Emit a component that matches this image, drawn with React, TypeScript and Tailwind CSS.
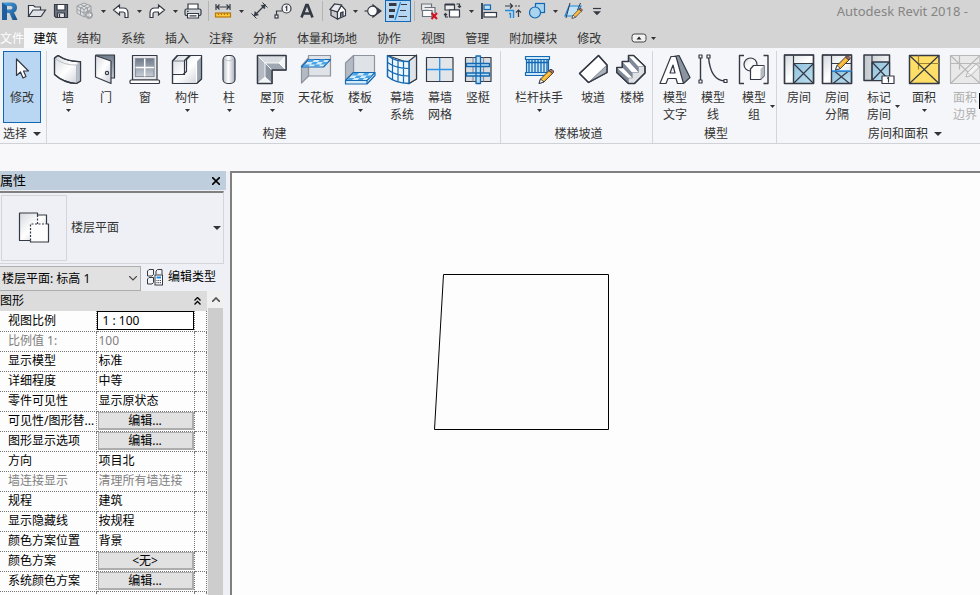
import type { ReactNode } from 'react';

const ink = '#343a45';
const blue = '#1268b3';

function Small({ children }: { children: ReactNode }) {
  return (
    <svg viewBox="0 0 20 20" className="h-5 w-5" fill="none" stroke={ink} strokeWidth="1.2" aria-hidden="true">
      {children}
    </svg>
  );
}

function Big({ children }: { children: ReactNode }) {
  return (
    <svg viewBox="0 0 32 32" className="h-8 w-8 shrink-0" fill="none" stroke={ink} strokeWidth="1.2" strokeLinejoin="round" aria-hidden="true">
      {children}
    </svg>
  );
}

function Gradients() {
  return (
    <svg className="absolute h-0 w-0" aria-hidden="true">
      <defs>
        <linearGradient id="gl" x1="0" y1="0" x2="1" y2="1">
          <stop offset="0" stopColor="#d5d8dd" />
          <stop offset="0.5" stopColor="#ffffff" />
          <stop offset="1" stopColor="#c9cdd4" />
        </linearGradient>
        <linearGradient id="gd" x1="0" y1="0" x2="0" y2="1">
          <stop offset="0" stopColor="#6f7a8a" />
          <stop offset="1" stopColor="#c8ced6" />
        </linearGradient>
        <linearGradient id="gh" x1="0" y1="0" x2="1" y2="0">
          <stop offset="0" stopColor="#b4bac3" />
          <stop offset="0.45" stopColor="#ffffff" />
          <stop offset="1" stopColor="#a5adb8" />
        </linearGradient>
        <linearGradient id="gw" x1="0" y1="0" x2="1" y2="0">
          <stop offset="0" stopColor="#c2c7ce" />
          <stop offset="1" stopColor="#f3f4f5" />
        </linearGradient>
        <linearGradient id="gb" x1="0" y1="0" x2="1" y2="1">
          <stop offset="0" stopColor="#8fc0dd" />
          <stop offset="1" stopColor="#bfe0f0" />
        </linearGradient>
        <linearGradient id="gr" x1="0" y1="0" x2="1" y2="1">
          <stop offset="0" stopColor="#4ba3e6" />
          <stop offset="1" stopColor="#184f86" />
        </linearGradient>
      </defs>
    </svg>
  );
}

function Caret({ className = '' }: { className?: string }) {
  return (
    <svg viewBox="0 0 5 3" className={`h-[3px] w-[5px] shrink-0 ${className}`} aria-hidden="true">
      <path d="M0 0h5L2.500 3z" fill="#333" />
    </svg>
  );
}

function WideCaret() {
  return (
    <svg viewBox="0 0 8 4" className="h-1 w-2 shrink-0" aria-hidden="true">
      <path d="M0 0h8L4 4z" fill="#333" />
    </svg>
  );
}

function Pencil({ light = false }: { light?: boolean }) {
  return (
    <g strokeWidth="0.9" stroke={light ? '#b5b5b5' : ink}>
      <path d="M0 14L1.500 9.500 10 1l3.500 3L5 12.500z" fill={light ? '#eee' : '#f6ad22'} />
      <path d="M0 14L1.500 9.500 5 12.500z" fill={light ? '#f5f5f5' : '#fff'} />
      <path d="M10 1l1-1h2l1.500 1.500V3l-1 1z" fill={light ? '#ddd' : '#b86a5a'} />
      <path d="M3.500 10.500l7.500-7.500" stroke={light ? '#fff' : '#ffe39a'} />
    </g>
  );
}

const quick: Record<string, ReactNode> = {
  open: (
    <Small>
      <path d="M1.500 15.500V4.500h5l1.500 1.500h5.500v3" fill="#f4f4f4" />
      <path d="M1.500 15.500L6 9h12.500l-4.500 6.500z" fill="#dfe2e6" />
    </Small>
  ),
  save: (
    <Small>
      <path d="M3.500 3.500h13v13h-11.500l-1.500-1.500z" fill="#6d7582" />
      <path d="M6 3.500h8v5.500H6z" fill="#fff" />
      <path d="M6.500 12h7v4.500h-7z" fill="#e4e6e9" />
      <path d="M8.500 13v3" />
    </Small>
  ),
  sync: (
    <Small>
      <g stroke="#9b9ea2" strokeWidth="1" fill="#dcdddf">
        <path d="M9 2l7 3v7l-7 4-7-4V5z" />
        <path d="M2 5l7 3.500L16 5M9 8.500V16" />
        <path d="M5.500 3.500l7 3.500v7M12.500 3.500l-7 3.500v7M2 8.500l7 3.500 7-3.500" fill="none" />
        <circle cx="14" cy="14" r="3.500" fill="#a9acb0" />
        <path d="M12 14h4M14.500 12.500L16 14l-1.500 1.500" stroke="#fff" fill="none" />
      </g>
    </Small>
  ),
  undo: (
    <Small>
      <path d="M2.500 9l6-5v3h3.500q5 0 5 5v4.500h-3V13q0-2-2-2H8.500v3z" fill="#fff" />
    </Small>
  ),
  redo: (
    <Small>
      <path d="M17.500 9l-6-5v3H8q-5 0-5 5v4.500h3V13q0-2 2-2h3.500v3z" fill="#fff" />
    </Small>
  ),
  print: (
    <Small>
      <path d="M5 8V3h10v5" fill="#fff" />
      <rect x="2" y="8" width="16" height="6.500" rx="1.500" fill="#cfd3d8" />
      <path d="M4.500 12.500h11V17h-11z" fill="#fff" />
      <path d="M6.500 14.800h7M4 10.300h1.500" />
    </Small>
  ),
  measure: (
    <Small>
      <path d="M3 3v6M17 3v6M3.500 6h13M6.500 3.500L4 6l2.500 2.500M13.500 3.500L16 6l-2.500 2.500" />
      <rect x="2.500" y="12" width="15" height="4" fill="#ffc83d" stroke="#b77a08" />
      <path d="M5.500 12v2M8.500 12v2M11.500 12v2M14.500 12v2" stroke="#b77a08" />
    </Small>
  ),
  dimension: (
    <Small>
      <path d="M5.500 14.500L16 4" />
      <path d="M16.500 3.500l-4.500 1 3.500 3.500zM5 15l1-4.500 3.500 3.500z" fill="#343a45" strokeWidth="0.500" />
      <path d="M2.500 12.500l5 5M13.500 1.500l5 5" strokeWidth="1" />
    </Small>
  ),
  tag: (
    <Small>
      <circle cx="13.500" cy="7.500" r="4.500" fill="#f4f4f4" />
      <path d="M12.500 6.500l1.200-1V10M9 10H3.500v5" />
      <rect x="2" y="14" width="3" height="3" fill="#fff" />
    </Small>
  ),
  text: (
    <Small>
      <path d="M4.500 16.500L9.300 4h1.400l4.800 12.500M7 12.500h6.500" strokeWidth="2.600" />
    </Small>
  ),
  house: (
    <Small>
      <path d="M4 8.500l6.500 2.500v7L4 14.500z" fill="#c9cdd2" />
      <path d="M10.500 11l4-6.500 4 4.500v5.500l-8 3.500z" fill="#fff" />
      <path d="M3 8.500L7.500 3l7 1-4 7z" fill="#e9eaed" />
      <path d="M13.500 16.500V12l2.500-1v4.500" fill="#7c8593" />
    </Small>
  ),
  section: (
    <Small>
      <path d="M10 4l8 6-8 6z" fill="#343a45" />
      <circle cx="9.500" cy="10" r="4.800" fill="#fafafa" />
      <path d="M1.500 10h3" />
    </Small>
  ),
  thin: (
    <Small>
      <path d="M1 3.500h7.500M1 9.500h6M1 15.500h5" strokeWidth="3" />
      <path d="M13 3.500h6M12 9.500h6M10.500 15.500H19" strokeWidth="1.200" />
      <path d="M12.500 1L7 19" stroke="#1d8be0" />
    </Small>
  ),
  closeHidden: (
    <Small>
      <path d="M2.500 9.500V3h10v3" fill="#ececec" stroke="#6c727b" />
      <path d="M5.500 6.500h10.500V12" fill="#ececec" stroke="#6c727b" />
      <path d="M3.500 9.500h9.500v6H3.500z" fill="#fff" stroke="#6c727b" />
      <path d="M12.500 12l5.500 6M18 12l-5.500 6" stroke="#d01020" strokeWidth="2" />
    </Small>
  ),
  switchWin: (
    <Small>
      <path d="M2 3.500h9.500V9H2z" fill="#eee" />
      <path d="M2 3.500h9.500M6.500 9.500h10" strokeWidth="1.800" />
      <path d="M6.500 9h10v7h-10z" fill="#fff" />
      <path d="M13.500 3h3V6M15 5l1.500 1.500L18 5M5 16H2.500v-3.500M1 14l1.500-1.500L4 14" />
    </Small>
  ),
  align: (
    <Small>
      <path d="M3 2v16" strokeWidth="1.800" />
      <rect x="5" y="4" width="6.500" height="4.500" fill="#bfe0f5" stroke={blue} />
      <rect x="5" y="11.500" width="12.500" height="4.500" fill="#fff" />
    </Small>
  ),
  trim: (
    <Small>
      <path d="M2 5h7M7 2.500L9.500 5 7 7.500M15.500 16V9M13 11.500L15.500 9l2.500 2.500" />
      <path d="M2 9.500h8.500V17M6 12.500h1.500V17" stroke="#1d8be0" strokeWidth="1.400" />
      <path d="M12 5h6" strokeDasharray="2 1" />
    </Small>
  ),
  shape: (
    <Small>
      <rect x="8.500" y="2.500" width="9" height="9" fill="#a9d4ee" stroke={blue} />
      <circle cx="8" cy="11.500" r="5.500" fill="#a9d4ee" stroke={blue} />
    </Small>
  ),
  plane: (
    <Small>
      <path d="M6 5h12l-5 10H2z" fill="#bfe0f5" stroke="#1d8be0" />
      <path d="M7 2L3 17M17.500 2l-3 7" strokeWidth="1" />
      <g transform="translate(9 7.500) scale(.7)">
        <Pencil />
      </g>
    </Small>
  ),
  customize: (
    <Small>
      <path d="M6 7.500h8" />
      <path d="M6.500 10.500h7L10 14z" fill="#343a45" strokeWidth="0.500" />
    </Small>
  ),
};

type QuickItem = { icon?: string; label: string; kind?: 'caret' | 'sep' };
const quickItems: QuickItem[] = [
  { icon: 'open', label: '打开' },
  { icon: 'save', label: '保存' },
  { icon: 'sync', label: '同步' },
  { kind: 'caret', label: '同步选项' },
  { icon: 'undo', label: '放弃' },
  { kind: 'caret', label: '放弃列表' },
  { icon: 'redo', label: '重做' },
  { kind: 'caret', label: '重做列表' },
  { icon: 'print', label: '打印' },
  { kind: 'sep', label: 's1' },
  { icon: 'measure', label: '测量' },
  { kind: 'caret', label: '测量选项' },
  { icon: 'dimension', label: '对齐尺寸标注' },
  { icon: 'tag', label: '按类别标记' },
  { icon: 'text', label: '文字' },
  { kind: 'sep', label: 's2' },
  { icon: 'house', label: '默认三维视图' },
  { kind: 'caret', label: '三维视图选项' },
  { icon: 'section', label: '剖面' },
  { icon: 'thin', label: '细线' },
  { kind: 'sep', label: 's3' },
  { icon: 'closeHidden', label: '关闭隐藏窗口' },
  { icon: 'switchWin', label: '切换窗口' },
  { kind: 'caret', label: '切换窗口选项' },
  { icon: 'align', label: '对齐' },
  { icon: 'trim', label: '修剪' },
  { icon: 'shape', label: '连接' },
  { kind: 'caret', label: '连接选项' },
  { icon: 'plane', label: '工作平面' },
  { icon: 'customize', label: '自定义快速访问工具栏' },
];

function TitleBar() {
  return (
    <header className="flex h-[22px] items-center">
      <button aria-label="应用程序菜单" className="flex h-[22px] w-[25px] shrink-0 items-center">
        <svg viewBox="0 0 20 20" className="h-5 w-5" aria-hidden="true">
          <path d="M2 1.500h9q6 0 6 5 0 3.500-3 5l3.500 7.500h-5L9.500 12H7v7H2z" fill="url(#gr)" />
          <path d="M7 5h3.500q2 0 2 1.800t-2 1.800H7z" fill="#d6d6d6" />
          <path d="M2 1.500L7 5v14H2z" fill="#1f5f9e" />
        </svg>
      </button>
      {quickItems.map((q) => {
        if (q.kind === 'sep') {
          return (
            <span key={q.label} className="flex w-1.5 shrink-0 justify-center">
              <span className="h-5 w-px bg-[#b4b4b4]" />
            </span>
          );
        }
        if (q.kind === 'caret') {
          return (
            <button key={q.label} aria-label={q.label} className="flex h-[22px] w-3 shrink-0 items-center justify-center">
              <Caret />
            </button>
          );
        }
        const active = q.icon === 'thin';
        return (
          <button
            key={q.label}
            aria-label={q.label}
            className={`flex h-[22px] shrink-0 items-center justify-center ${active ? 'w-[26px] border border-[#1268b3] bg-[#b5d5f1]' : 'w-6'}`}
          >
            {quick[q.icon as string]}
          </button>
        );
      })}
      <span className="ml-auto shrink-0 pr-3 text-[13px] leading-5 text-[#858585]">Autodesk Revit 2018 -</span>
    </header>
  );
}

const tabs = ['结构', '系统', '插入', '注释', '分析', '体量和场地', '协作', '视图', '管理', '附加模块', '修改'];

function TabBar() {
  return (
    <nav className="flex h-[26px] items-end text-xs leading-5 text-[#333]">
      <button className="h-5 w-6 shrink-0 pt-px whitespace-nowrap text-white">文件</button>
      <button className="h-5 w-[43px] shrink-0 bg-[#f7f8fa] pt-px text-black">建筑</button>
      {tabs.map((t) => (
        <button key={t} className="h-5 shrink-0 px-2.5 pt-px">
          {t}
        </button>
      ))}
      <button aria-label="最小化功能区" className="ml-5 flex h-5 items-center gap-1">
        <svg viewBox="0 0 16 10" className="h-2.5 w-4" aria-hidden="true">
          <rect x="1" y="1" width="14" height="8" rx="2.500" fill="#f2f2f2" stroke="#444" />
          <path d="M5.500 6.500h5L8 3.500z" fill="#222" />
        </svg>
        <Caret />
      </button>
    </nav>
  );
}

const roomBase = (
  <>
    <path d="M1.500 2h29v28.500h-29z" fill="url(#gl)" />
    <path d="M10.500 10.500h20v20h-20z" fill="url(#gb)" />
    <path d="M10.500 2v28.500M10.500 10.500h20M10.500 10.500l20 20M30.500 10.500l-20 20" />
  </>
);

const art: Record<string, ReactNode> = {
  墙: (
    <Big>
      <path d="M2.500 5L6 2.500Q16 9 28.500 8.500V28L24.500 30.500Q12 30 2.500 21.500z" fill="url(#gl)" />
      <path d="M24.500 12l4-3.500V28l-4 2.500z" fill="#b9bfc8" stroke="none" />
      <path d="M2.500 5Q12 12.500 24.500 12v18.500M24.500 12l4-3.500" stroke="#a3a9b3" strokeWidth="0.700" />
      <path d="M2.500 5L6 2.500Q16 9 28.500 8.500V28L24.500 30.500Q12 30 2.500 21.500z" />
    </Big>
  ),
  门: (
    <Big>
      <path d="M5.500 2h19v23h-4" fill="url(#gd)" />
      <path d="M5.500 2.500L21 8v22.500L5.500 24z" fill="url(#gl)" />
      <circle cx="17" cy="20" r="1.600" fill="#fff" />
    </Big>
  ),
  窗: (
    <Big>
      <path d="M3.500 2.500h24.500V27H3.500z" fill="#e6e8eb" />
      <path d="M6.500 5.500h18.500v18H6.500z" fill="url(#gd)" stroke="#8a919c" />
      <path d="M15.700 5.500v18M6.500 14.500H25" stroke="#fff" strokeWidth="1.500" />
      <rect x="1" y="27" width="29.500" height="3.500" rx="1" fill="#fff" />
    </Big>
  ),
  构件: (
    <Big>
      <path d="M1.500 8L6.500 2.500h24V26l-5 4.500h-24z" fill="url(#gl)" />
      <path d="M25.500 8l5-5.500V26l-5 4.500z" fill="#99a2af" stroke="none" />
      <path d="M18 8h7.500v22.500M25.500 8l5-5.500" stroke="#fff" />
      <path d="M1.500 21.500H12l3.500-3V6.500l4-4M12 21.500l1.500 0V7.500L18.500 2.500" />
      <path d="M1.500 8h11.500" stroke="#8a919c" />
      <path d="M1.500 8L6.500 2.500h24V26l-5 4.500h-24z" />
    </Big>
  ),
  柱: (
    <Big>
      <rect x="10" y="2.500" width="12" height="28" rx="4.500" fill="url(#gh)" />
      <path d="M11 6q5 3.500 10 0" stroke="#b4bac3" strokeWidth="0.800" />
    </Big>
  ),
  屋顶: (
    <Big>
      <path d="M1.500 2.500h28.500V17H16v13.500H1.500z" fill="#d9dce0" />
      <path d="M1.500 2.500L9 10v14l-7.500 6.500z" fill="#b4bac3" stroke="none" />
      <path d="M9 10l7 7v13.500L9 24z" fill="#8b94a1" stroke="none" />
      <path d="M9 10h14l7 7H16z" fill="#9fa7b2" stroke="none" />
      <path d="M23 10l7-7.500V17z" fill="#f4f5f6" stroke="none" />
      <path d="M1.500 30.500L9 24l7 6.500z" fill="#f4f5f6" stroke="none" />
      <path d="M1.500 2.500L9 10h14l7-7.500M23 10l7 7M9 10v14l-7.500 6.500M9 24l7 6.500M9 10l7 7" stroke="#fff" strokeWidth="0.900" />
      <path d="M1.500 2.500h28.500V17H16v13.500H1.500z" strokeWidth="1.400" />
    </Big>
  ),
  天花板: (
    <Big>
      <g stroke="#8d949e">
        <path d="M8.500 2.500h22V23h-22z" fill="#dfe2e6" />
        <path d="M1.500 13L8.500 5v18l-7 7z" fill="#b4bac3" />
      </g>
      <path d="M1.500 14l7-7.500h22L23.500 14z" fill="#d4ecfa" stroke={blue} />
      <path d="M9 6.500h5.500l-2 2.500H7zM20 6.500h5L23 9h-5zM13 9h5l-2.500 2.500h-5zM23 9h5l-2.500 2.500h-5zM5 11.500h5L8 14H2.500zM15.500 11.500h5L18 14h-5z" fill="#4ba3e6" stroke="none" />
    </Big>
  ),
  楼板: (
    <Big>
      <g stroke="#8d949e">
        <path d="M9.500 2.500h21V20h-21z" fill="#dfe2e6" />
        <path d="M1.500 10l8-7.500V19l-8 8z" fill="#b4bac3" />
      </g>
      <path d="M1.500 27.500l8-8h21.500v3l-8 8.500H1.500z" fill="#d4ecfa" stroke={blue} />
      <path d="M1.500 27.500H23l8-8M23 27.500V31" stroke={blue} />
      <path d="M10 20h5l-2.500 2.500h-5zM20.500 20h5L23 22.500h-5zM13 22.500h5L15.500 25h-5zM23 22.500h5L25.500 25h-5zM5 25h5.500L8 27H3zM15.500 25h5L18.500 27h-5z" fill="#4ba3e6" stroke="none" />
    </Big>
  ),
  幕墙系统: (
    <Big>
      <path d="M1.500 2.500H30.500V26L23 30.500V10z" fill="#eceef0" />
      <path d="M23 8l7.500-6V26L23 30.500z" fill="#dfe2e6" />
      <path d="M1.500 2.500Q10 9 23 8.500v22Q9 30 1.500 23.500z" fill="#eef7fd" stroke={blue} strokeWidth="1.500" />
      <path d="M6.500 5.500v21.500M12 7.500V29M17.500 8.500V30M1.500 9.500Q10 15.500 23 15.500M1.500 16.500Q10 23 23 23" stroke={blue} />
    </Big>
  ),
  幕墙网格: (
    <Big>
      <path d="M2.500 4.500h26.500v24H2.500z" fill="#e3e6e9" />
      <path d="M15.700 5v23M3 16.500h25.500" stroke="#2f94e8" strokeWidth="1.400" />
    </Big>
  ),
  竖梃: (
    <Big>
      <path d="M3.500 4.500h25.500v24H3.500z" fill="#d9dde1" />
      <path d="M11 4.500v24M21.500 4.500v24" stroke="#8a919c" />
      <g fill="#b9dff5" stroke={blue} strokeWidth="1.300">
        <path d="M4.500 10.500h23v3h-23zM4.500 20h23v3h-23zM14 3h4.500v27.500H14z" />
      </g>
    </Big>
  ),
  栏杆扶手: (
    <Big>
      <path d="M2.500 3.500h24v3h-24zM3.500 6.500h22v13h-22zM2.500 19.500h24v3h-24z" fill="#cbe7f8" stroke={blue} />
      <path d="M6 7v12M9 7v12M12 7v12M15 7v12M18 7v12M21 7v12M24 7v12M3 9.500h23" stroke={blue} strokeWidth="1.300" />
      <g transform="translate(16 16.500)">
        <Pencil />
      </g>
    </Big>
  ),
  坡道: (
    <Big>
      <path d="M2.500 20.500L21.500 2.500 30 12v7.500l-18.500 10z" fill="#fff" />
      <path d="M11.500 29.500L30 12v7.500z" fill="#aab1bc" stroke="#6d7582" strokeWidth="0.800" />
      <path d="M2.500 20.500L21.500 2.500 30 12v7.500l-18.500 10z" strokeWidth="1.400" />
    </Big>
  ),
  楼梯: (
    <Big>
      <path d="M12.500 2.500h5L29 13.500V20L18.500 30.500h-6L.8 19.500v-5h5.500v-6h6.200z" fill="#dfe1e4" />
      <path d="M12.500 2.500l10 11v6l-10-11zM6.300 8.500l10 11V25L6.300 14.500zM.8 14.500L12.500 25v5.500L.8 19.500z" fill="#7f8997" stroke="none" />
      <path d="M12.500 2.500h5L29 13.500h-6.500zM6.300 8.500h6.200l10 11h-6.200zM.8 14.500h5.500L16.300 25h-3.800z" fill="#fff" stroke="none" />
      <path d="M29 13.500h-6.500v6h-6.200V25h-3.800v5.500" stroke="#8a919c" strokeWidth="0.700" />
      <path d="M12.500 2.500h5L29 13.500V20L18.500 30.500h-6L.8 19.500v-5h5.500v-6h6.200z" strokeWidth="1.400" />
    </Big>
  ),
  模型文字: (
    <Big>
      <path d="M14 3.500L20 2.500l11 22-6.500 6H20z" fill="#8b94a1" />
      <path d="M1 30.500L12 3.500h5L24.500 30.500h-6l-1.500-5H9l-2 5zM11 20h5l-2-8z" fill="#fff" fillRule="evenodd" />
    </Big>
  ),
  模型线: (
    <Big>
      <path d="M3.500 4v24M11.500 4q2 23 16 24" strokeWidth="1.400" />
      <g fill="#fff">
        <path d="M2 2h3v3H2zM2 27h3v3H2zM10 2h3v3h-3zM27 26.500h3v3h-3z" />
      </g>
    </Big>
  ),
  模型组: (
    <Big>
      <path d="M6 2.500H1.500v28H6M25.500 2.500H30v28h-4.500" strokeWidth="1.400" />
      <circle cx="12.500" cy="11.500" r="6.500" fill="url(#gl)" />
      <path d="M12.500 16l3-3.500H26v10.500l-3.500 3.500h-10z" fill="#fff" />
      <path d="M22.500 16l3.500-3.500v10.500l-3.500 3.500z" fill="#b4bac3" stroke="none" />
    </Big>
  ),
  房间: (
    <Big>
      {roomBase}
      <path d="M1.500 2h29v28.500h-29z" strokeWidth="1.500" />
    </Big>
  ),
  房间分隔: (
    <Big>
      <path d="M1.500 2h29v28.500h-29z" fill="url(#gl)" />
      <path d="M10.500 18.500h20v12h-20z" fill="url(#gb)" />
      <path d="M10.500 2v28.500M10.500 10.500h20M14 18.500l14.500 12M27 18.500l-15 12" />
      <path d="M1.500 2h29v28.500h-29z" strokeWidth="1.500" />
      <path d="M11 18h19.500" stroke="#2f94e8" strokeWidth="1.600" />
      <g transform="translate(14.500 3)">
        <Pencil />
      </g>
    </Big>
  ),
  标记房间: (
    <Big>
      <path d="M1 2h25.500v25.500H1z" fill="url(#gw)" strokeWidth="1.500" />
      <path d="M9 9h17.500v18.500H9z" fill="url(#gb)" />
      <path d="M9 2v25.500M9 9h17.500M9 9l17.500 18.500M26.500 9L9 27.500" />
      <rect x="19" y="23" width="12" height="7.500" fill="#fff" />
      <path d="M24 25.500l1.500-1v5" />
    </Big>
  ),
  面积: (
    <Big>
      <path d="M1.500 2.500h29.500v28H1.500z" fill="#ffdf68" strokeWidth="1.500" />
      <path d="M10.500 2.500v14M10.500 10.500H31" stroke="#a08430" />
      <path d="M1.500 2.500l29.500 28M31 2.500l-29.500 28" />
    </Big>
  ),
  面积边界: (
    <Big>
      <g stroke="#b8b8b8">
        <path d="M1.500 2.500h29.500v28H1.500z" fill="#e9e9ea" />
        <path d="M1.500 2.500l29.500 28M31 2.500l-29.500 28M10.500 2.500v14M1.500 10.500H31" />
      </g>
      <g transform="translate(17 10)">
        <Pencil light />
      </g>
    </Big>
  ),
};

type Tool = { name: string; lines: string[]; width: string; menu?: 'below' | 'side'; off?: boolean };

function ToolButton({ tool }: { tool: Tool }) {
  return (
    <button className={`flex shrink-0 flex-col items-center ${tool.width} ${tool.off ? 'text-[#b0b0b0]' : 'text-[#333]'}`}>
      {art[tool.name]}
      <span className="mt-1 flex items-center gap-1 leading-[17px]">
        {tool.menu === 'side' && <span className="w-[5px]" />}
        <span className="flex flex-col">
          {tool.lines.map((l) => (
            <span key={l} className="whitespace-nowrap">{l}</span>
          ))}
        </span>
        {tool.menu === 'side' && <Caret />}
      </span>
      {tool.menu === 'below' && <Caret className="mt-[3px]" />}
    </button>
  );
}

function Panel({ title, tools, className, menu }: { title: string; tools: Tool[]; className: string; menu?: boolean }) {
  return (
    <section className={`flex shrink-0 flex-col border-r border-[#d3d5d9] pt-0.5 ${className}`}>
      <div className="flex h-[71px]">
        {tools.map((t) => (
          <ToolButton key={t.name} tool={t} />
        ))}
      </div>
      <h2 className="flex h-[19px] items-center justify-center gap-1.5 text-[#333]">
        {title}
        {menu && <WideCaret />}
      </h2>
    </section>
  );
}

const build: Tool[] = [
  { name: '墙', lines: ['墙'], width: 'w-[38px]', menu: 'below' },
  { name: '门', lines: ['门'], width: 'w-[38px]' },
  { name: '窗', lines: ['窗'], width: 'w-10' },
  { name: '构件', lines: ['构件'], width: 'w-11', menu: 'below' },
  { name: '柱', lines: ['柱'], width: 'w-10', menu: 'below' },
  { name: '屋顶', lines: ['屋顶'], width: 'w-[46px]', menu: 'below' },
  { name: '天花板', lines: ['天花板'], width: 'w-[42px]' },
  { name: '楼板', lines: ['楼板'], width: 'w-[46px]', menu: 'below' },
  { name: '幕墙系统', lines: ['幕墙', '系统'], width: 'w-[38px]' },
  { name: '幕墙网格', lines: ['幕墙', '网格'], width: 'w-[38px]' },
  { name: '竖梃', lines: ['竖梃'], width: 'w-[38px]' },
];
const circulation: Tool[] = [
  { name: '栏杆扶手', lines: ['栏杆扶手'], width: 'w-[68px]', menu: 'below' },
  { name: '坡道', lines: ['坡道'], width: 'w-10' },
  { name: '楼梯', lines: ['楼梯'], width: 'w-[38px]' },
];
const model: Tool[] = [
  { name: '模型文字', lines: ['模型', '文字'], width: 'w-[38px]' },
  { name: '模型线', lines: ['模型', '线'], width: 'w-[38px]' },
  { name: '模型组', lines: ['模型', '组'], width: 'w-11', menu: 'side' },
];
const room: Tool[] = [
  { name: '房间', lines: ['房间'], width: 'w-[38px]' },
  { name: '房间分隔', lines: ['房间', '分隔'], width: 'w-[38px]' },
  { name: '标记房间', lines: ['标记', '房间'], width: 'w-[46px]', menu: 'side' },
  { name: '面积', lines: ['面积'], width: 'w-11', menu: 'below' },
  { name: '面积边界', lines: ['面积', '边界'], width: 'w-[38px]', off: true },
];

function Ribbon() {
  return (
    <div className="relative flex shrink-0 overflow-hidden border-b border-[#d0d2d6] bg-[#f5f6f9] pt-[3px] text-xs">
      <section className="flex w-[47px] shrink-0 flex-col border-r border-[#d3d5d9] pl-[3px]">
        <button className="flex h-[72px] w-[38px] flex-col items-center border border-[#1268b3] bg-[#b9d6f2] pt-0.5 text-[#333]">
          <Big>
            <path d="M10.500 5v16.500l4-3.500 2.500 6 3-1.500-2.500-5.500h5z" fill="#fff" />
          </Big>
          <span className="mt-[3px] leading-[17px]">修改</span>
        </button>
        <h2 className="mt-px flex h-[19px] items-center gap-1.5 text-[#333]">
          选择
          <WideCaret />
        </h2>
      </section>
      <Panel title="构建" tools={build} className="w-[454px] pl-0.5" />
      <Panel title="楼梯坡道" tools={circulation} className="w-[152px] pl-1" />
      <Panel title="模型" tools={model} className="w-[124px] pl-[3px]" />
      <Panel title="房间和面积" tools={room} className="w-[254px] pl-[3px]" menu />
      <span className="absolute top-[45px] right-0 h-4 w-px bg-black" />
    </div>
  );
}

type Row = { label: string; value: string; kind?: 'input' | 'button'; off?: boolean };
const rows: Row[] = [
  { label: '视图比例', value: '1 : 100', kind: 'input' },
  { label: '比例值 1:', value: '100', off: true },
  { label: '显示模型', value: '标准' },
  { label: '详细程度', value: '中等' },
  { label: '零件可见性', value: '显示原状态' },
  { label: '可见性/图形替...', value: '编辑...', kind: 'button' },
  { label: '图形显示选项', value: '编辑...', kind: 'button' },
  { label: '方向', value: '项目北' },
  { label: '墙连接显示', value: '清理所有墙连接', off: true },
  { label: '规程', value: '建筑' },
  { label: '显示隐藏线', value: '按规程' },
  { label: '颜色方案位置', value: '背景' },
  { label: '颜色方案', value: '<无>', kind: 'button' },
  { label: '系统颜色方案', value: '编辑...', kind: 'button' },
  { label: '', value: '' },
];

function PropertyTable() {
  return (
    <table className="w-full table-fixed border-collapse bg-[#fdfdfd]">
      <colgroup>
        <col className="w-24" />
        <col />
        <col className="w-3" />
      </colgroup>
      <tbody>
        {rows.map((r, i) => (
          <tr key={r.label} className={`h-5 ${r.off ? 'text-[#808080]' : 'text-black'}`}>
            <th scope="row" className="border-r border-b border-dotted border-[#777] p-0 pl-2 text-left font-normal whitespace-nowrap">
              {r.kind === 'input' ? <label htmlFor="view-scale">{r.label}</label> : <span id={`prop-${i}`}>{r.label}</span>}
            </th>
            <td className="border-r border-b border-dotted border-[#777] p-0 whitespace-nowrap">
              {r.kind === 'input' && (
                <input id="view-scale" defaultValue={r.value} className="block h-[19px] w-full border border-black bg-white pl-[5px] leading-4" />
              )}
              {r.kind === 'button' && (
                <button aria-describedby={`prop-${i}`} className="ml-px block h-[18px] w-24 border border-r-2 border-b-2 border-[#adadad] bg-[#e1e1e1] text-center leading-[15px]">
                  {r.value}
                </button>
              )}
              {!r.kind && <span className="pl-0.5">{r.value}</span>}
            </td>
            <td className="border-r border-b border-dotted border-[#777] p-0" />
          </tr>
        ))}
      </tbody>
    </table>
  );
}

function Properties() {
  return (
    <aside className="flex w-[226px] shrink-0 flex-col overflow-hidden text-xs">
      <div className="flex h-[19px] shrink-0 items-center justify-between bg-[#bfcedc] pr-1.5 text-[13px] text-black">
        <h2>属性</h2>
        <button aria-label="关闭" className="flex h-4 w-3 items-center justify-end">
          <svg viewBox="0 0 8 8" className="h-2 w-2" stroke="#000" strokeWidth="1.600" aria-hidden="true">
            <path d="M0 0l8 8M8 0L0 8" />
          </svg>
        </button>
      </div>
      <div className="mt-px mr-0.5 flex min-h-0 flex-1 flex-col">
        <button className="flex h-[73px] shrink-0 items-center gap-1 border-t-2 border-r border-b border-t-[#808080] border-r-[#d3d5d9] border-b-[#d3d5d9] pr-0.5 pl-px text-[#333]">
          <span className="flex h-[66px] w-[66px] items-center justify-center border border-[#d3d5d9]">
            <Big>
              <path d="M1.500 1h18v2h9v25h-27z" fill="url(#gl)" stroke="none" />
              <path d="M12.500 28.500h-11V1h18v2h9v9" />
              <path d="M12.500 12h18v18h-18z" fill="#fdfdfd" stroke="none" />
              <path d="M12.500 28.500V30h18V12H28.500" />
              <path d="M12.500 28.500V12h16M19.500 3v9" strokeDasharray="2 1.500" />
            </Big>
          </span>
          <span className="flex-1 text-left">楼层平面</span>
          <WideCaret />
        </button>
        <div className="mt-0.5 flex shrink-0 items-start">
          <div className="relative flex">
            <select aria-label="视图实例" className="h-[25px] w-[141px] appearance-none border border-l-0 border-[#adadad] bg-[#e1e1e1] pl-0.5 text-black">
              <option>楼层平面: 标高 1</option>
            </select>
            <svg viewBox="0 0 8 5" className="pointer-events-none absolute top-2.5 right-1 h-[5px] w-2" fill="none" stroke="#444" strokeWidth="1.200" aria-hidden="true">
              <path d="M0 0l4 4 4-4" />
            </svg>
          </div>
          <button className="ml-1 flex h-[22px] items-center gap-[3px] whitespace-nowrap text-black">
            <Small>
              <path d="M2.500 4L4 2.500h4.500v5L7 9H2.500zM11 4l1.500-1.500H17v5M2.500 12L4 10.500h4.500v5L7 17H2.500zM11 4v3.500" fill="#f4f4f4" strokeWidth="1" />
              <rect x="10" y="8" width="7.500" height="10" fill="#fff" strokeWidth="1" />
              <path d="M11.500 10.500h4.500" stroke="#1d8be0" strokeWidth="2" />
              <path d="M11.500 13.500h4.500M11.500 15.700h4.500" strokeDasharray="1 0.800" />
            </Small>
            编辑类型
          </button>
        </div>
        <div className="flex min-h-0 flex-1">
          <div className="min-w-0 flex-1 overflow-hidden">
            <h3 className="flex h-5 items-center justify-between bg-[#dcdcdc] pr-1.5 text-black">
              图形
              <svg viewBox="0 0 7 8" className="h-2 w-[7px]" fill="none" stroke="#000" strokeWidth="1.300" aria-hidden="true">
                <path d="M.5 3.500l3-3 3 3M.5 7.500l3-3 3 3" />
              </svg>
            </h3>
            <PropertyTable />
          </div>
          <div className="flex w-[17px] shrink-0 flex-col items-center bg-[#f0f0f0]">
            <button aria-label="向上滚动" className="flex h-[17px] w-full items-center justify-center">
              <svg viewBox="0 0 8 5" className="h-[5px] w-2" fill="none" stroke="#505050" strokeWidth="1.600" aria-hidden="true">
                <path d="M0 5l4-4 4 4" />
              </svg>
            </button>
            <span className="w-[15px] flex-1 bg-[#cdcdcd]" />
          </div>
        </div>
      </div>
    </aside>
  );
}

export default function App() {
  return (
    <div className="flex h-screen flex-col overflow-hidden bg-[#eef0f5] font-['Noto_Sans','Noto_Sans_CJK_SC',sans-serif]">
      <Gradients />
      <div className="shrink-0 bg-[#d4d4d4]">
        <TitleBar />
        <TabBar />
      </div>
      <Ribbon />
      <div className="h-[27px] shrink-0 bg-[#f8f8fa]" />
      <div className="flex min-h-0 flex-1">
        <Properties />
        <main className="ml-1 min-w-0 flex-1 border-t-2 border-l-2 border-[#808080] bg-[#fdfdfd]">
          <svg width="400" height="300" aria-label="绘图区域" role="img">
            <path d="M211.500 101.500h165v155h-174z" fill="none" stroke="#000" />
          </svg>
        </main>
      </div>
    </div>
  );
}
